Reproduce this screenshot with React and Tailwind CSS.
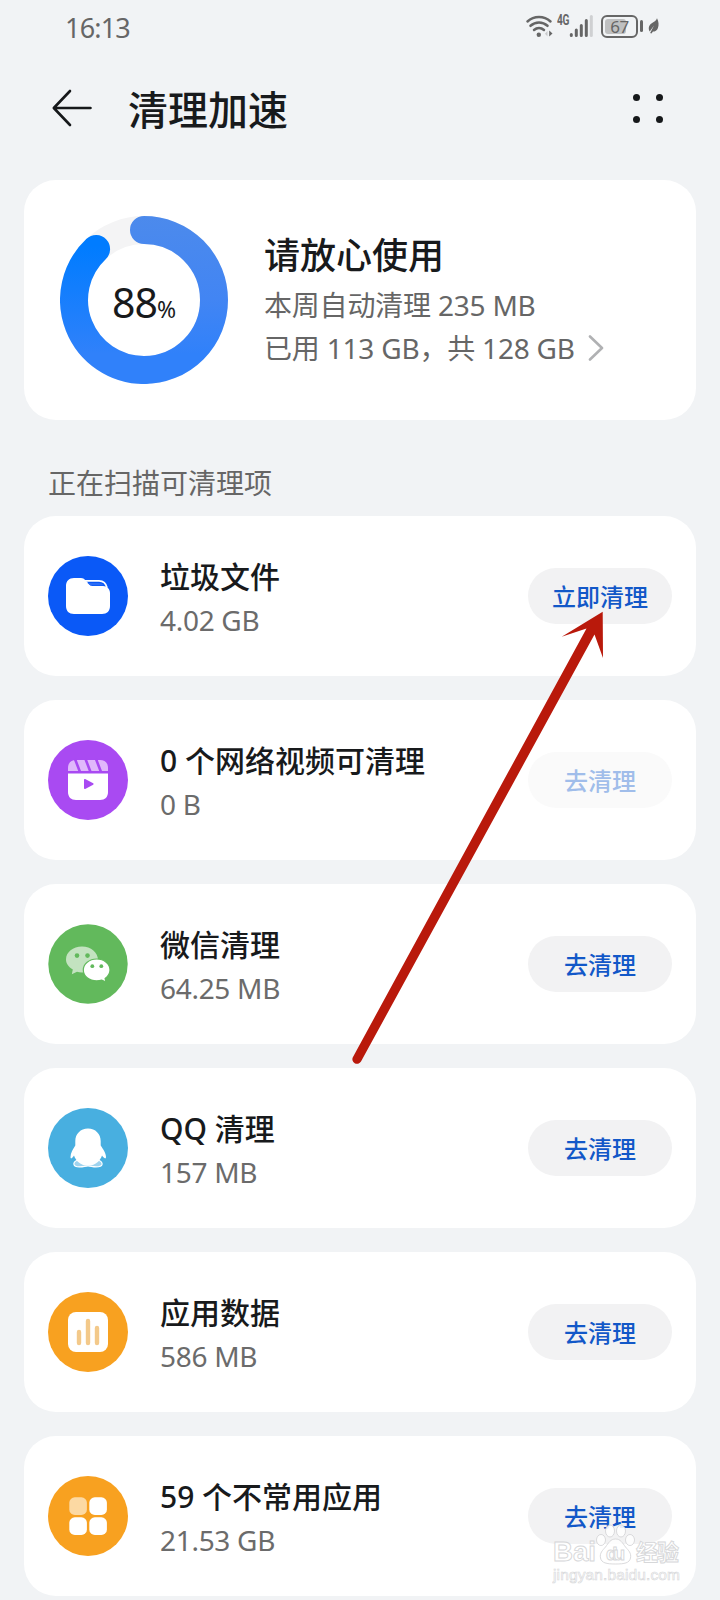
import React from 'react';

const items = [
  { id: 'junk', title: '垃圾文件', size: '4.02 GB', action: '立即清理', icon: FolderIcon },
  { id: 'video', title: '0 个网络视频可清理', size: '0 B', action: '去清理', icon: VideoIcon, disabled: true },
  { id: 'wechat', title: '微信清理', size: '64.25 MB', action: '去清理', icon: WechatIcon },
  { id: 'qq', title: 'QQ 清理', size: '157 MB', action: '去清理', icon: QQIcon },
  { id: 'data', title: '应用数据', size: '586 MB', action: '去清理', icon: DataIcon },
  { id: 'apps', title: '59 个不常用应用', size: '21.53 GB', action: '去清理', icon: AppsIcon },
];

function FolderIcon() {
  return (
    <svg viewBox="0 0 80 80" className="w-20 h-20">
      <circle cx="40" cy="40" r="40" fill="#0a59f7" />
      <path d="M37 24.800h14c4.500 0 7 2.500 8 7" fill="none" stroke="#fff" strokeWidth="1.800" />
      <path
        d="M26 22h7c2 0 3 .7 4.200 2l3.600 3.800c1 1.400 2 2.200 3.500 2.200H55c4 0 7 3 7 7V50c0 5-3 8-8 8H26c-5 0-8-3-8-8V30c0-5 3-8 8-8z"
        fill="#fff"
      />
      <path d="M39.500 26.900h11.500c2.200 0 3.500.8 4.500 2.300H42z" fill="#2b6cf5" />
    </svg>
  );
}

function VideoIcon() {
  return (
    <svg viewBox="0 0 80 80" className="w-20 h-20">
      <circle cx="40" cy="40" r="40" fill="#a94af2" />
      <path d="M20 31v-3c0-5 3-8 8-8h24c5 0 8 3 8 8v3z" fill="#e0b8fb" />
      <path d="M27 19l5 13M37.500 19l5 13M48 19l5 13" stroke="#a94af2" strokeWidth="2.600" />
      <path d="M20 33.500h40V52c0 5-3 8-8 8H28c-5 0-8-3-8-8z" fill="#fff" />
      <path d="M36.800 39.800l8 4.200-8 4.200z" fill="#a94af2" stroke="#a94af2" strokeWidth="1.600" strokeLinejoin="round" />
    </svg>
  );
}

function WechatIcon() {
  return (
    <svg viewBox="0 0 80 80" className="w-20 h-20">
      <circle cx="40" cy="40" r="39.700" fill="#62b95c" />
      <path
        d="M34 22.500c9 0 16 6 16 13.500s-7 12.500-16 12.500c-2 0-3.600-.2-5-.7l-5.200 2.400 1-4.700c-4.200-2.500-6.800-6-6.800-10 0-7.400 7-13 16-13z"
        fill="#c3e3c0"
      />
      <circle cx="29" cy="31.600" r="2.300" fill="#62b95c" />
      <circle cx="39.500" cy="31.600" r="2.300" fill="#62b95c" />
      <path
        d="M48.700 35c7.500 0 13.300 4.900 13.300 11 0 3.500-1.800 6.200-4.900 8.400l.9 3.600-4.200-1.900c-1.500.5-3.300.8-5.100.8-7.500 0-13.400-4.800-13.400-10.900s5.900-11 13.400-11z"
        fill="#fff"
        stroke="#62b95c"
        strokeWidth="1.200"
      />
      <circle cx="44.300" cy="42.200" r="1.900" fill="#62b95c" />
      <circle cx="53.300" cy="42.200" r="1.900" fill="#62b95c" />
    </svg>
  );
}

function QQIcon() {
  return (
    <svg viewBox="0 0 80 80" className="w-20 h-20">
      <circle cx="40" cy="40" r="40" fill="#48afe0" />
      <path
        d="M30 52c-3 1-4.500 3-4 4.700.5 1.900 3 2.300 6 2.200 3.300 0 5.500-.9 8-.9s4.700.9 8 .9c3 0 5.500-.3 6-2.200.4-1.700-1-3.700-4-4.700z"
        fill="#9fd3ee"
        stroke="#fff"
        strokeWidth="1.200"
      />
      <path
        d="M40 20.500c7.500 0 12.700 5.500 12.700 12.500v4.500c2.200 3.500 5.300 7.500 5.300 11.500 0 1.200-.5 1.600-1.200 1.300-.9-.4-1.800-1.600-2.800-2.800-1 2.700-2.300 4.800-4.200 6.500-2.500 2.300-6 3.700-9.800 3.700s-7.300-1.400-9.800-3.700c-1.900-1.700-3.200-3.800-4.200-6.500-1 1.200-1.500 2.400-2.400 2.800-.7.300-1.100-.1-1.100-1.300 0-4 2.600-8 4.800-11.500V33c0-7 5.200-12.500 12.700-12.500z"
        fill="#fff"
      />
    </svg>
  );
}

function DataIcon() {
  return (
    <svg viewBox="0 0 80 80" className="w-20 h-20">
      <circle cx="40" cy="40" r="40" fill="#f8a120" />
      <rect x="20" y="20" width="40" height="40" rx="8" fill="#fff" />
      <path d="M31 40v11M40 29v22M49 36v15" stroke="#f3c98a" strokeWidth="4.400" strokeLinecap="round" />
    </svg>
  );
}

function AppsIcon() {
  return (
    <svg viewBox="0 0 80 80" className="w-20 h-20">
      <circle cx="40" cy="40" r="40" fill="#f8a120" />
      <rect x="21.300" y="21.300" width="17.600" height="17.600" rx="5.500" fill="#fcd9a3" />
      <rect x="41.300" y="21.300" width="17.600" height="17.600" rx="5.500" fill="#fff" />
      <rect x="21.300" y="41.300" width="17.600" height="17.600" rx="5.500" fill="#fff" />
      <rect x="41.300" y="41.300" width="17.600" height="17.600" rx="5.500" fill="#fff" />
    </svg>
  );
}

const StatusBar = () => (
  <div className="h-[54px] pl-[65px] pr-[60px] flex items-center justify-between text-[#666]">
    <span className="text-[27px] leading-none tracking-[-0.8px]">16:13</span>
    <div className="flex items-center -mt-[2px]">
      {/* wifi */}
      <svg viewBox="0 0 28 24" className="w-7 h-6" fill="none" stroke="#666" strokeWidth="2.500" strokeLinecap="round">
        <path d="M2.500 7.500c6.500-6 16.500-6 23 0" />
        <path d="M5.500 11.800c5-4.500 12-4.500 17 0" />
        <path d="M9 16c3-2.600 7-2.600 10 0" />
        <circle cx="13.800" cy="20.800" r="2.200" fill="#666" stroke="none" />
        <path d="M22.500 17v5.500L20 19.800z" fill="#c8c9cb" stroke="none" />
        <path d="M24.200 16.500v6l3.300-3z" fill="#666" stroke="none" />
      </svg>
      <span className="ml-[4px] -mt-[11px] w-[12px] text-[13px] font-bold leading-none tracking-[-0.5px] origin-left scale-x-[0.78] scale-y-110 font-['Roboto']">
        4G
      </span>
      <svg viewBox="0 0 24 24" className="w-6 h-6" fill="none" stroke="#666" strokeWidth="3" strokeLinecap="round">
        <path d="M2.300 20.500v1M7.300 16v5.500M12.300 11.500v10M17.300 6.500v15" />
        <path d="M22.300 2.500v19" stroke="#cfd0d2" />
      </svg>
      {/* battery */}
      <div className="ml-2 w-[37px] h-[23px] rounded-md border-2 border-[#666] p-[2px]">
        <div className="relative h-full">
          <div className="h-full w-[21px] rounded-[3px] bg-[#bfc0c1]"></div>
          <span className="absolute inset-0 flex items-center justify-center text-[17px] leading-none tracking-[-0.5px]">
            67
          </span>
        </div>
      </div>
      <div className="ml-[2px] w-[3px] h-3 rounded-full bg-[#666]"></div>
      <svg viewBox="0 0 14 18" className="ml-[5px] w-3 h-[18px]">
        <path d="M10.500 0c2 4 2.500 8 1 11.500-1 2.500-3.200 4-5.700 4L4 17.800l-1.500-.5L7 8.500l-5 7C.2 12 .6 8.500 4 6c3-2 5.500-3 6.500-6z" fill="#666" />
      </svg>
    </div>
  </div>
);

const Header = () => (
  <header className="h-[110px] pl-[52px] pr-[57px] pb-[2px] flex items-center">
    <svg viewBox="0 0 40 40" className="w-10 h-10" fill="none" stroke="#16181a" strokeWidth="2.600" strokeLinecap="round" strokeLinejoin="round">
      <path d="M38.500 20H2M18 3L1.800 20 18 37" />
    </svg>
    <h1 className="ml-9 pt-1 text-[40px] leading-none font-medium text-[#181a1c]">清理加速</h1>
    <div className="ml-auto grid grid-cols-2 gap-x-4 gap-y-[15px]">
      <span className="w-[7px] h-[7px] rounded-full bg-[#16181a]"></span>
      <span className="w-[7px] h-[7px] rounded-full bg-[#16181a]"></span>
      <span className="w-[7px] h-[7px] rounded-full bg-[#16181a]"></span>
      <span className="w-[7px] h-[7px] rounded-full bg-[#16181a]"></span>
    </div>
  </header>
);

const UsageRing = () => (
  <div className="relative w-[168px] h-[168px]">
    <svg viewBox="0 0 168 168" className="w-full h-full" fill="none" strokeWidth="28" strokeLinecap="round">
      <defs>
        <linearGradient id="ringRight" gradientUnits="userSpaceOnUse" x1="84" y1="0" x2="84" y2="138">
          <stop offset="0" stopColor="#4c8aec" />
          <stop offset="0.600" stopColor="#4285f3" />
          <stop offset="1" stopColor="#3081fa" />
        </linearGradient>
        <linearGradient id="ringLeft" gradientUnits="userSpaceOnUse" x1="84" y1="138" x2="84" y2="30">
          <stop offset="0" stopColor="#3081fa" />
          <stop offset="1" stopColor="#007cff" />
        </linearGradient>
      </defs>
      <circle cx="84" cy="84" r="70" stroke="#f4f4f5" />
      <path d="M84 154A70 70 0 0 1 36.100 33" stroke="url(#ringLeft)" />
      <path d="M84 14A70 70 0 0 1 84 154" stroke="url(#ringRight)" />
    </svg>
    <div className="absolute inset-0 pt-[6px] flex items-baseline justify-center text-[#181a1c] leading-[160px]">
      <span className="text-[41px] tracking-[-1px]">88</span>
      <span className="text-[23px]">%</span>
    </div>
  </div>
);

const SummaryCard = () => (
  <section className="mx-6 h-60 rounded-[32px] bg-white pl-9 flex items-center">
    <UsageRing />
    <div className="ml-[36px] text-[28px] text-[#666]">
      <h2 className="text-[36px] leading-[52px] pb-[2px] font-medium text-[#181a1c]">请放心使用</h2>
      <p className="leading-[43px] tracking-[-0.2px]">本周自动清理 235 MB</p>
      <p className="leading-[43px] tracking-[-0.2px] flex items-center">
        已用 113 GB，共 128 GB
        <svg viewBox="0 0 16 26" className="ml-[13px] mb-[2px] w-4 h-[26px]" fill="none" stroke="#b0b1b3" strokeWidth="2.600" strokeLinecap="round" strokeLinejoin="round">
          <path d="M2 1.500L14 13 2 24.500" />
        </svg>
      </p>
    </div>
  </section>
);

const CleanItem = ({ item }) => {
  const Icon = item.icon;
  return (
    <li className="h-40 rounded-[32px] bg-white px-6 flex items-center">
      <Icon />
      <div className="ml-8 pt-[3px]">
        <h3 className="text-[30px] leading-[44px] font-medium text-[#181a1c]">{item.title}</h3>
        <p className="text-[28px] leading-[42px] tracking-[-0.3px] text-[#6b6b6b]">{item.size}</p>
      </div>
      <button
        disabled={item.disabled}
        className="ml-auto w-36 h-14 pt-[2px] rounded-full bg-[#f2f2f3] text-[24px] font-medium text-[#1258c8] disabled:bg-[#fafafa] disabled:text-[#a0bdea]"
      >
        {item.action}
      </button>
    </li>
  );
};

const Watermark = () => (
  <div className="absolute left-[552px] top-[1520px] w-[140px] h-[66px] opacity-90">
    <svg viewBox="0 0 140 66" className="w-full h-full" fill="#fff" stroke="#d2d3d5" strokeWidth="0.900">
      <ellipse cx="49" cy="20" rx="4.500" ry="5.500" />
      <ellipse cx="58" cy="11" rx="4.500" ry="6" />
      <ellipse cx="69" cy="11" rx="4.500" ry="6" />
      <ellipse cx="78" cy="20" rx="4.500" ry="5.500" />
      <path d="M63.500 19c5 0 7 4 10 8 3 3.500 6 6 5 11-1 5-6 6-15 6s-14-1-15-6c-1-5 2-7.500 5-11 3-4 5-8 10-8z" />
      <g className="font-['Liberation_Sans'] font-bold">
        <text x="1" y="41" fontSize="27" textLength="43" lengthAdjust="spacingAndGlyphs">Bai</text>
        <text x="54" y="40" fontSize="19" textLength="19">du</text>
      </g>
      <text x="84" y="40" fontSize="22" fontWeight="700" textLength="43">经验</text>
      <text x="1" y="60" fontSize="15.500" strokeWidth="0.600" textLength="127" className="font-['Liberation_Sans']">jingyan.baidu.com</text>
    </svg>
  </div>
);

export default function App() {
  return (
    <div className="relative w-[720px] h-[1600px] overflow-hidden bg-[#f1f3f5] font-['Noto_Sans','Noto_Sans_CJK_SC',sans-serif]">
      <StatusBar />
      <Header />
      <div className="pt-4">
        <SummaryCard />
      </div>
      <h2 className="ml-12 mt-[42px] mb-3 h-[42px] text-[28px] leading-[42px] text-[#666]">正在扫描可清理项</h2>
      <ul className="mx-6 flex flex-col gap-6">
        {items.map((item) => (
          <CleanItem key={item.id} item={item} />
        ))}
      </ul>

      {/* pointer to the clean button */}
      <svg viewBox="0 0 260 460" className="absolute left-[350px] top-[608px] w-[260px] h-[460px]" fill="#b9190b">
        <path d="M252.700 3.700L253 50l-8.500-23.500L11 453.500a4.600 4.600 0 0 1-8-4.600L236.500 20.500 211.700 28.700z" />
      </svg>
      <Watermark />
    </div>
  );
}
